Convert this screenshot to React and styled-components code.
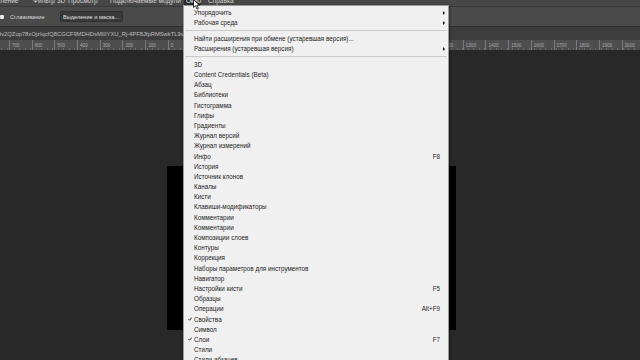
import React from 'react';
import styled, { createGlobalStyle } from 'styled-components';

const GlobalStyle = createGlobalStyle`
  html, body {
    margin: 0;
    padding: 0;
    background: #282828;
  }
  body {
    font-family: "Liberation Sans", Arial, sans-serif;
  }
`;

const Screen = styled.div`
  position: relative;
  width: 640px;
  height: 360px;
  overflow: hidden;
  display: flex;
  flex-direction: column;
  background: #282828;
`;

const MenuBar = styled.div`
  flex: none;
  height: 6px;
  display: flex;
  align-items: flex-end;
  overflow: hidden;
  background: #474747;
  border-bottom: 1px solid #383838;
`;

const MenuTitle = styled.span`
  flex: none;
  width: ${p => p.w}px;
  margin-left: ${p => p.shift || 0}px;
  padding-left: ${p => (p.active ? 2 : 0)}px;
  box-sizing: border-box;
  font-size: 6.5px;
  line-height: 10px;
  white-space: nowrap;
  color: ${p => (p.active ? '#f2f2f2' : '#d4d4d4')};
  background: ${p => (p.active ? '#2b2b2b' : 'transparent')};
`;

const OptionsBar = styled.div`
  flex: none;
  height: 19px;
  display: flex;
  align-items: center;
  background: #4a4a4a;
  border-bottom: 1px solid #2f2f2f;
`;

const CheckBox = styled.span`
  width: 4px;
  height: 4px;
  background: #e8e8e8;
  border-radius: 1px;
`;

const OptionLabel = styled.span`
  margin-left: 6px;
  font-size: 5.6px;
  color: #d8d8d8;
`;

const OptionButton = styled.span`
  margin-left: 15px;
  width: 63px;
  height: 11px;
  display: flex;
  align-items: center;
  justify-content: center;
  box-sizing: border-box;
  background: #393939;
  border: 1px solid #303030;
  border-radius: 1px;
  font-size: 5.6px;
  color: #e0e0e0;
`;

const Workspace = styled.div`
  flex: 1;
  display: flex;
  min-height: 0;
`;

const MainColumn = styled.div`
  flex: 1;
  display: flex;
  flex-direction: column;
`;

const TabBar = styled.div`
  flex: none;
  height: 13px;
  display: flex;
  align-items: center;
  background: #3d3d3d;
  overflow: hidden;
`;

const TabTitle = styled.span`
  margin-left: -2px;
  font-size: 5.8px;
  color: #bdbdbd;
  white-space: nowrap;
`;

const RulerRow = styled.div`
  flex: none;
  height: 10px;
  display: flex;
  background: #4e4e4e;
`;

const RulerStrip = styled.div`
  flex: 1;
  display: flex;
  overflow: hidden;
  padding-left: 9px;
  background-image: repeating-linear-gradient(
    to right,
    transparent 0,
    transparent 4.54px,
    #6a6a6a 4.54px,
    #6a6a6a 5.54px
  );
  background-size: 100% 2px;
  background-position: 9px 100%;
  background-repeat: repeat-x;
`;

const RulerMark = styled.span`
  flex: none;
  width: 22.7px;
  overflow: hidden;
  box-sizing: border-box;
  border-left: 1px solid #7a7a7a;
  padding: 3px 0 0 2px;
  font-size: 4.6px;
  line-height: 6px;
  white-space: nowrap;
  color: #a9a9a9;
`;

const RulerCorner = styled.div`
  width: 8px;
  background: #4e4e4e;
  display: flex;
  align-items: center;
  justify-content: center;
  &::after {
    content: '';
    width: 3px;
    height: 1px;
    background: #8a8a8a;
  }
`;

const CanvasRow = styled.div`
  flex: 1;
  display: flex;
  min-height: 0;
`;

const CanvasView = styled.div`
  flex: 1;
  padding: 116px 0 0 167px;
  background: #282828;
`;

const Document = styled.div`
  width: 289px;
  height: 164px;
  background: #000;
`;

const Scrollbar = styled.div`
  width: 7px;
  border-left: 1px solid #222;
  background: #2d2d2d;
  display: flex;
  flex-direction: column;
  align-items: center;
`;

const ScrollThumb = styled.div`
  margin-top: 140px;
  width: 6px;
  flex: 1;
  background: #585858;
`;

const Dock = styled.div`
  width: 10px;
  display: flex;
  flex-direction: column;
  background: #3d3d3d;
  padding-top: 6px;
  box-sizing: border-box;
`;

const DockPanel = styled.div`
  flex: 1;
  display: flex;
  flex-direction: column;
  background: #4a4a4a;
  border-left: 3px solid #303030;
  border-top: 1px solid #3a3a3a;
`;

const DockIcon = styled.span`
  margin-top: ${p => p.gap}px;
  margin-left: 2px;
  width: ${p => p.w || 5}px;
  height: ${p => p.h || 4}px;
  border: 1px solid #bdbdbd;
  border-right: none;
  box-sizing: border-box;
`;

const DockRule = styled.span`
  margin-top: ${p => p.gap}px;
  height: 1px;
  background: #363636;
`;

const Dropdown = styled.div`
  position: absolute;
  left: 183px;
  top: 5px;
  width: 266px;
  height: 380px;
  box-sizing: border-box;
  padding-top: 1.5px;
  background: #f0f0f0;
  border: 1px solid #9c9c9c;
  box-shadow: 1px 1px 2px rgba(0, 0, 0, 0.45);
  font-size: 6.3px;
  color: #1c1c1c;
`;

const Item = styled.div`
  display: grid;
  grid-template-columns: 10px 1fr auto 8px;
  align-items: center;
  height: 10.2px;
  white-space: nowrap;
`;

const CheckCell = styled.span`
  display: flex;
  justify-content: flex-end;
  padding-right: 2px;
`;

const Shortcut = styled.span`
  color: #2a2a2a;
`;

const ArrowCell = styled.span`
  display: flex;
  justify-content: center;
  &::after {
    content: '';
    display: ${p => (p.on ? 'block' : 'none')};
    border-left: 2.5px solid #111;
    border-top: 2px solid transparent;
    border-bottom: 2px solid transparent;
  }
`;

const Separator = styled.div`
  height: 5.5px;
  display: flex;
  align-items: center;
  padding: 0 1px;
  &::after {
    content: '';
    flex: 1;
    height: 1px;
    background: #cacaca;
  }
`;

const Cursor = styled.svg`
  position: absolute;
  left: 193px;
  top: -1px;
`;

const menuTitles = [
  { label: 'Выделение', w: 49, shift: -16 },
  { label: 'Фильтр', w: 24 },
  { label: '3D', w: 11 },
  { label: 'Просмотр', w: 42 },
  { label: 'Подключаемые модули', w: 74 },
  { label: 'Окно', w: 17, active: true },
  { label: 'Справка', w: 40, shift: 7 },
];

const rulerLabels = [
  700, 600, 500, 400, 300, 200, 100, 0, 100, 200, 300, 400, 500, 600, 700,
  800, 900, 1000, 1100, 1200, 1300, 1400, 1500, 1600, 1700, 1800, 1900, 2000,
];

const topItems = [
  { label: 'Упорядочить', sub: true },
  { label: 'Рабочая среда', sub: true },
  'sep',
  { label: 'Найти расширения при обмене (устаревшая версия)...' },
  { label: 'Расширения (устаревшая версия)', sub: true },
  'sep',
];

const panels = [
  { label: '3D' },
  { label: 'Content Credentials (Beta)' },
  { label: 'Абзац' },
  { label: 'Библиотеки' },
  { label: 'Гистограмма' },
  { label: 'Глифы' },
  { label: 'Градиенты' },
  { label: 'Журнал версий' },
  { label: 'Журнал измерений' },
  { label: 'Инфо', key: 'F8' },
  { label: 'История' },
  { label: 'Источник клонов' },
  { label: 'Каналы' },
  { label: 'Кисти' },
  { label: 'Клавиши-модификаторы' },
  { label: 'Комментарии' },
  { label: 'Комментарии' },
  { label: 'Композиции слоев' },
  { label: 'Контуры' },
  { label: 'Коррекция' },
  { label: 'Наборы параметров для инструментов' },
  { label: 'Навигатор' },
  { label: 'Настройки кисти', key: 'F5' },
  { label: 'Образцы' },
  { label: 'Операции', key: 'Alt+F9' },
  { label: 'Свойства', checked: true },
  { label: 'Символ' },
  { label: 'Слои', key: 'F7', checked: true },
  { label: 'Стили' },
  { label: 'Стили абзацев' },
];

const Check = () => (
  <svg width="4" height="4" viewBox="0 0 8 8">
    <path d="M1 4.2 L3.2 6.5 L7 1.2" fill="none" stroke="#1a1a1a" strokeWidth="1.8" />
  </svg>
);

const MenuItem = ({ label, shortcut, checked, sub }) => (
  <Item>
    <CheckCell>{checked && <Check />}</CheckCell>
    <span>{label}</span>
    <Shortcut>{shortcut}</Shortcut>
    <ArrowCell on={sub ? 1 : 0} />
  </Item>
);

const App = () => {
  return (
    <Screen>
      <GlobalStyle />
      <MenuBar>
        {menuTitles.map(t => (
          <MenuTitle key={t.label} w={t.w} shift={t.shift} active={t.active}>
            {t.label}
          </MenuTitle>
        ))}
      </MenuBar>
      <OptionsBar>
        <CheckBox />
        <OptionLabel>Сглаживание</OptionLabel>
        <OptionButton>Выделение и маска...</OptionButton>
      </OptionsBar>
      <Workspace>
        <MainColumn>
          <TabBar>
            <TabTitle>9v2QZop78xOjzIqcfQ8CGCF9MDHDsMIIIYXU_Rj-4PF8JfpRMSwkTL9v2QZop78xOj.png @ 33,3% (RGB/8#)</TabTitle>
          </TabBar>
          <RulerRow>
            <RulerStrip>
              {rulerLabels.map((n, i) => (
                <RulerMark key={i}>{n}</RulerMark>
              ))}
            </RulerStrip>
            <RulerCorner />
          </RulerRow>
          <CanvasRow>
            <CanvasView>
              <Document />
            </CanvasView>
            <Scrollbar>
              <ScrollThumb />
            </Scrollbar>
          </CanvasRow>
        </MainColumn>
        <Dock>
          <DockPanel>
            <DockIcon gap={25} />
            <DockIcon gap={14} />
            <DockIcon gap={12} h={3} />
            <DockIcon gap={15} />
            <DockRule gap={16} />
            <DockIcon gap={34} h={3} />
            <DockIcon gap={17} h={5} />
          </DockPanel>
        </Dock>
      </Workspace>

      <Dropdown>
        {topItems.map((it, i) =>
          it === 'sep' ? (
            <Separator key={'s' + i} />
          ) : (
            <MenuItem key={'t' + i} label={it.label} sub={it.sub} />
          )
        )}
        {panels.map((it, i) => (
          <MenuItem key={'p' + i} label={it.label} shortcut={it.key} checked={it.checked} />
        ))}
      </Dropdown>

      <Cursor width="7" height="11" viewBox="0 0 7 11">
        <path d="M0.5 0.5 L0.5 8.5 L2.5 6.6 L4 10 L5.3 9.4 L3.9 6.2 L6.4 6.2 Z" fill="#fff" stroke="#000" strokeWidth="0.8" />
      </Cursor>
    </Screen>
  );
};

export default App;
